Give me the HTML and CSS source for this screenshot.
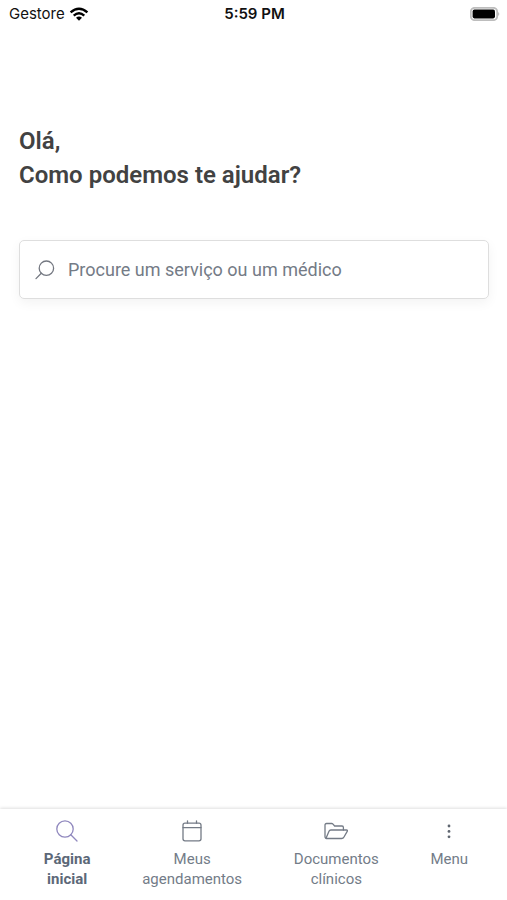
FILE: index.html
```html
<!DOCTYPE html>
<html lang="pt-BR">
<head>
  <meta charset="utf-8">
  <meta name="viewport" content="width=device-width, initial-scale=1">
  <title>Página inicial</title>
  <link rel="stylesheet" href="styles.css">
</head>
<body>
  <div class="app">
    <header class="status">
      <div class="status-left">
        <span>Gestore</span>
        <svg class="wifi" viewBox="0 0 20 14" width="20" height="14" aria-hidden="true">
          <path d="M1.6 5.4Q10-2 18.4 5.4" />
          <path d="M4.7 8.6Q10 4 15.3 8.6" />
          <path class="solid" d="M7 10.8Q10 8.4 13 10.8L10 13.8Z" />
        </svg>
      </div>
      <time class="status-time">5:59 PM</time>
      <div class="status-right">
        <svg viewBox="0 0 30 14" width="30" height="14" aria-hidden="true">
          <rect x="0.8" y="0.8" width="26.4" height="12.4" rx="4" fill="#fff" stroke="#bdbdbd" stroke-width="1.8" />
          <rect x="2.6" y="2.6" width="22.4" height="8.8" rx="1.8" fill="#000" />
          <path d="M28.3 5Q30.2 7 28.3 9Z" fill="#aaa" />
        </svg>
      </div>
    </header>

    <main class="content">
      <h1 class="greeting">Olá,<br>Como podemos te ajudar?</h1>
      <label class="search">
        <svg viewBox="0 0 20 20" width="20" height="20" aria-hidden="true">
          <circle cx="11.4" cy="8.2" r="7.2" />
          <path d="M6.3 13.3L1 18.6" />
        </svg>
        <input type="text" aria-label="Procure um serviço ou um médico" placeholder="Procure um serviço ou um médico">
      </label>
    </main>

    <nav class="tabs">
      <a class="tab tab-active" href="#inicio" aria-current="page">
        <svg viewBox="0 0 24 24" width="24" height="24" aria-hidden="true">
          <circle cx="10" cy="10" r="8.2" />
          <path d="M15.8 15.8L22 22" />
        </svg>
        <span>Página<br>inicial</span>
      </a>
      <a class="tab" href="#agendamentos">
        <svg viewBox="0 0 24 24" width="24" height="24" aria-hidden="true">
          <rect x="3" y="4.2" width="18" height="17.6" rx="2" />
          <path d="M3 8.6H21M7.5 1.8V4.2M16.5 1.8V4.2" />
        </svg>
        <span>Meus<br>agendamentos</span>
      </a>
      <a class="tab" href="#documentos">
        <svg viewBox="0 0 24 24" width="24" height="24" aria-hidden="true">
          <path d="M1.8 19.2Q1 18.8 1 17.8V6Q1 4.5 2.5 4.5H7.6Q8.4 4.5 9 5.2L10.6 7H18Q19.4 7 19.4 8.4V11" />
          <path d="M2 19.3L5 12.2Q5.5 11 6.8 11H22.4Q24 11 23.2 12.4L20 18Q19.2 19.5 17.6 19.5H2.3" />
        </svg>
        <span>Documentos<br>clínicos</span>
      </a>
      <a class="tab" href="#menu">
        <svg class="dots" viewBox="0 0 24 24" width="24" height="24" aria-hidden="true">
          <circle cx="12" cy="7" r="1.4" />
          <circle cx="12" cy="12.4" r="1.4" />
          <circle cx="12" cy="17.8" r="1.4" />
        </svg>
        <span>Menu</span>
      </a>
    </nav>
  </div>
</body>
</html>
```
FILE: styles.css
```css
* {
  box-sizing: border-box;
}

body {
  margin: 0;
  background: #fff;
  color: #424242;
  font-family: Roboto, "Liberation Sans", sans-serif;
}

.app {
  display: flex;
  flex-direction: column;
  min-height: 100vh;
}

.status {
  display: grid;
  grid-template-columns: 1fr auto 1fr;
  align-items: center;
  height: 27px;
  padding: 0 7px 0 9px;
  color: #111;
  font-family: Inter, "Liberation Sans", sans-serif;
  font-size: 15px;
}

.status-left {
  display: flex;
  align-items: center;
  gap: 4px;
}

.status-time {
  font-weight: 600;
}

.status-right {
  display: flex;
  justify-content: flex-end;
}

.wifi {
  fill: none;
  stroke: #000;
  stroke-width: 2.4;
}

.wifi .solid {
  fill: #000;
  stroke: none;
}

.content {
  flex: 1;
  padding: 97px 18px 0 19px;
}

.greeting {
  margin: 0 0 48px;
  font-size: 24px;
  font-weight: 600;
  line-height: 34px;
}

.search {
  display: flex;
  align-items: center;
  gap: 13px;
  height: 59px;
  padding: 0 15px;
  border: 1px solid #dedede;
  border-radius: 5px;
  box-shadow: 0 4px 12px rgba(0, 0, 0, 0.05);
}

.search svg {
  flex: none;
  fill: none;
  stroke: #737780;
  stroke-width: 1.3;
  stroke-linecap: round;
}

.search input {
  flex: 1;
  min-width: 0;
  padding: 0;
  border: 0;
  outline: 0;
  background: none;
  color: #424242;
  font: inherit;
  font-size: 18px;
}

.search input::placeholder {
  color: #747b86;
  opacity: 1;
}

.tabs {
  display: flex;
  justify-content: space-around;
  height: 91px;
  padding: 10px 13px 0 18px;
  box-shadow: 0 -1px 3px rgba(0, 0, 0, 0.13);
}

.tab {
  display: flex;
  flex-direction: column;
  align-items: center;
  gap: 6px;
  color: #737c88;
  font-size: 15px;
  line-height: 20px;
  text-align: center;
  text-decoration: none;
}

.tab svg {
  fill: none;
  stroke: #747b86;
  stroke-width: 1.3;
  stroke-linecap: round;
  stroke-linejoin: round;
}

.tab .dots {
  fill: #5f6670;
  stroke: none;
}

.tab-active {
  color: #5c6878;
  font-weight: 700;
}

.tab-active svg {
  stroke: #9088be;
}
```
